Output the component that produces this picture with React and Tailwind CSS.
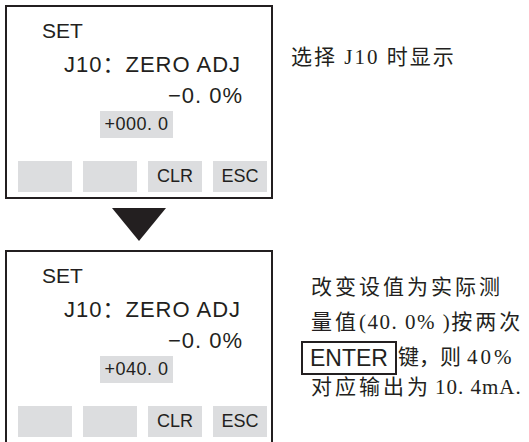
const sans = "font-['Liberation_Sans','Noto_Sans_CJK_SC',sans-serif]";
const serif = "font-['Liberation_Serif','Noto_Sans_CJK_SC',serif]";

const Panel = ({ value }) => (
  <div className={`flex h-[194px] w-[268px] shrink-0 flex-col border-2 border-[#231f20] ${sans}`}>
    <div className="ml-[35px] mt-[13px] text-[21px] leading-none">SET</div>
    <div className="ml-[57px] mt-[13px] text-[22px] leading-none tracking-[1px]">
      J10：ZERO ADJ
    </div>
    <div className="mr-[28px] mt-[9px] self-end text-[22px] leading-none tracking-[1px]">
      −0. 0%
    </div>
    <div className="ml-[93px] mt-[4px] flex h-[27px] w-[73px] items-center justify-center bg-[#dcdddf] text-[18px] tracking-[0.5px]">
      {value}
    </div>
    <div className="ml-[11px] mt-[23px] flex gap-[11px]">
      {["", "", "CLR", "ESC"].map((label, i) => (
        <div
          key={i}
          className="flex h-[31px] w-[54px] items-center justify-center bg-[#dcdddf] text-[18px]"
        >
          {label}
        </div>
      ))}
    </div>
  </div>
);

export default function App() {
  return (
    <div className="h-[442px] w-[529px] overflow-hidden bg-white text-[#231f20]">
      <div className="flex pl-[5px] pt-[5px]">
        <Panel value="+000. 0" />
        <p className={`ml-[18px] mt-[37px] whitespace-nowrap text-[21px] leading-[30px] tracking-[2px] ${serif}`}>
          选择 J10 时显示
        </p>
      </div>

      <div className="ml-[5px] flex w-[268px] justify-center py-[9px]">
        <svg width="54" height="33" viewBox="0 0 54 33">
          <polygon points="0,0 54,0 27,33" fill="#231f20" />
        </svg>
      </div>

      <div className="flex pl-[5px]">
        <Panel value="+040. 0" />
        <div className={`ml-[38px] mt-[21px] whitespace-nowrap text-[21px] ${serif}`}>
          <div className="flex h-[34px] items-center tracking-[3px]">改变设值为实际测</div>
          <div className="flex h-[35px] items-center">
            <span className="tracking-[3px]">量值</span>
            <span className="tracking-[1.5px]">(40. 0% )</span>
            <span className="tracking-[3px]">按两次</span>
          </div>
          <div className="flex h-[36px] items-center">
            <span
              className={`-ml-[10px] mr-[1px] flex h-[34px] w-[96px] items-center justify-center border-2 border-[#231f20] text-[23px] ${sans}`}
            >
              ENTER
            </span>
            <span>键，则</span>
            <span className="ml-[6px] tracking-[3px]">40%</span>
          </div>
          <div className="flex h-[24px] items-center">
            <span className="tracking-[3px]">对应输出为</span>
            <span className="ml-[4px] tracking-[1px]">10. 4mA.</span>
          </div>
        </div>
      </div>
    </div>
  );
}
